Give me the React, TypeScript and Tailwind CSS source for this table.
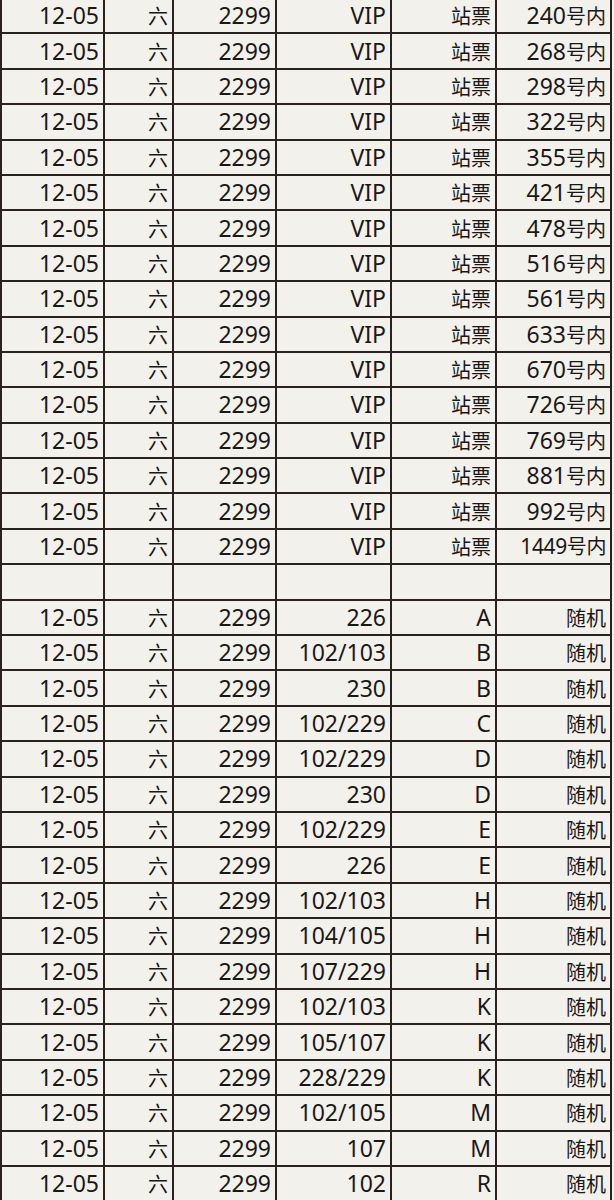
const vipSeats = ['240', '268', '298', '322', '355', '421', '478', '516', '561', '633', '670', '726', '769', '881', '992', '1449'];

const areaRows: [string, string][] = [
  ['226', 'A'],
  ['102/103', 'B'],
  ['230', 'B'],
  ['102/229', 'C'],
  ['102/229', 'D'],
  ['230', 'D'],
  ['102/229', 'E'],
  ['226', 'E'],
  ['102/103', 'H'],
  ['104/105', 'H'],
  ['107/229', 'H'],
  ['102/103', 'K'],
  ['105/107', 'K'],
  ['228/229', 'K'],
  ['102/105', 'M'],
  ['107', 'M'],
  ['102', 'R'],
];

type Row = string[] | null;

const rows: Row[] = [
  ...vipSeats.map((n) => ['12-05', '六', '2299', 'VIP', '站票', `${n}号内`]),
  null,
  ...areaRows.map(([sec, zone]) => ['12-05', '六', '2299', sec, zone, '随机']),
];

const widths = ['w-[103px]', 'w-[69px]', 'w-[103px]', 'w-[115px]', 'w-[105px]', 'w-[115px]'];

// CJK glyphs sit a little smaller than the latin text in the sheet
function CellText({ text, tight }: { text: string; tight?: boolean }) {
  const parts = text.split(/([\u4e00-\u9fff]+)/).filter(Boolean);
  return (
    <span className={tight ? 'text-[21px] tracking-[-0.4px]' : ''}>
      {parts.map((p, i) =>
        /[\u4e00-\u9fff]/.test(p) ? (
          <span key={i} className="text-[20px]">
            {p}
          </span>
        ) : (
          <span key={i}>{p}</span>
        ),
      )}
    </span>
  );
}

export default function App() {
  return (
    <div className="h-[1200px] w-[614px] overflow-hidden bg-[#f3f1ec] text-[#1a1817] font-['Noto_Sans','Noto_Sans_CJK_SC',sans-serif] text-[23px] leading-none">
      <div className="-mt-px w-[612px] border-l-2 border-[#2b2220]">
        {rows.map((row, r) => (
          <div key={r} className="flex h-[35.4px]">
            {widths.map((w, c) => (
              <div
                key={c}
                className={`${w} flex shrink-0 items-center justify-end border-b-2 border-r-2 border-[#2b2220] pr-[4px]`}
              >
                {row && <CellText text={row[c]} tight={row[c].startsWith('1449')} />}
              </div>
            ))}
          </div>
        ))}
      </div>
    </div>
  );
}
